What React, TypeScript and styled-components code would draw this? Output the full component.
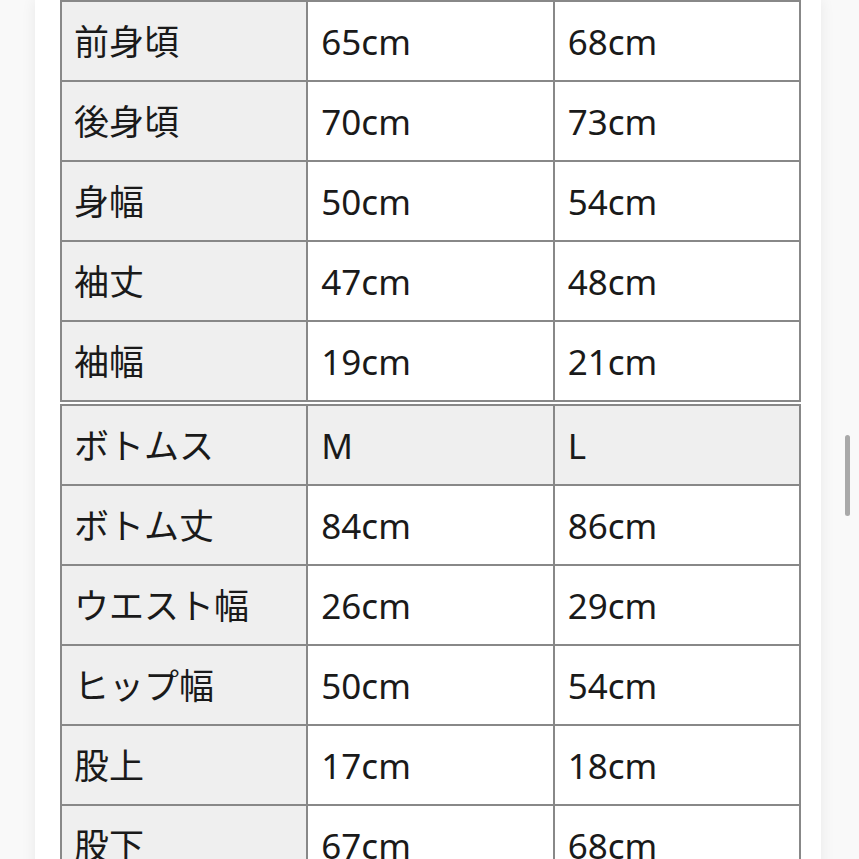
import styled, { createGlobalStyle } from "styled-components";

const GlobalStyle = createGlobalStyle`
  html, body {
    margin: 0;
    padding: 0;
    background: #f9f9f9;
    overflow: hidden;
  }
  body {
    font-family: "Noto Sans", "Noto Sans CJK JP", sans-serif;
    color: #1a1a1a;
  }
`;

const Page = styled.div`
  position: relative;
  width: 859px;
  height: 859px;
  overflow: hidden;
  padding-left: 35px;
  box-sizing: border-box;
`;

const Card = styled.div`
  width: 786px;
  min-height: 900px;
  background: #fff;
  box-shadow: 0 0 14px rgba(0, 0, 0, 0.07);
  padding: 0 20px 0 25px;
  box-sizing: border-box;
  display: flex;
  flex-direction: column;
  gap: 2px;
`;

const SizeTable = styled.table`
  width: 741px;
  border-collapse: collapse;
  table-layout: fixed;
`;

const Row = styled.tr`
  height: 80px;
`;

const Cell = styled.td<{ $head?: boolean }>`
  border: 2px solid #888;
  background: ${(p) => (p.$head ? "#efefef" : "#fff")};
  padding: 0 0 0 12px;
  font-size: 35px;
  line-height: 1;
  white-space: nowrap;
  vertical-align: middle;
  &:not(:first-child) {
    padding-left: 13px;
  }
`;

const ScrollThumb = styled.div`
  position: absolute;
  top: 435px;
  left: 845px;
  width: 5px;
  height: 81px;
  border-radius: 3px;
  background: #a9a9a9;
`;

type Line = { label: string; m: string; l: string; head?: boolean };

const tops: Line[] = [
  { label: "前身頃", m: "65cm", l: "68cm" },
  { label: "後身頃", m: "70cm", l: "73cm" },
  { label: "身幅", m: "50cm", l: "54cm" },
  { label: "袖丈", m: "47cm", l: "48cm" },
  { label: "袖幅", m: "19cm", l: "21cm" },
];

const bottoms: Line[] = [
  { label: "ボトムス", m: "M", l: "L", head: true },
  { label: "ボトム丈", m: "84cm", l: "86cm" },
  { label: "ウエスト幅", m: "26cm", l: "29cm" },
  { label: "ヒップ幅", m: "50cm", l: "54cm" },
  { label: "股上", m: "17cm", l: "18cm" },
  { label: "股下", m: "67cm", l: "68cm" },
];

const Table = ({ rows }: { rows: Line[] }) => (
  <SizeTable>
    <tbody>
      {rows.map((r) => (
        <Row key={r.label}>
          <Cell $head>{r.label}</Cell>
          <Cell $head={r.head}>{r.m}</Cell>
          <Cell $head={r.head}>{r.l}</Cell>
        </Row>
      ))}
    </tbody>
  </SizeTable>
);

export default function App() {
  return (
    <>
      <GlobalStyle />
      <Page>
        <Card>
          <Table rows={tops} />
          <Table rows={bottoms} />
        </Card>
        <ScrollThumb />
      </Page>
    </>
  );
}
